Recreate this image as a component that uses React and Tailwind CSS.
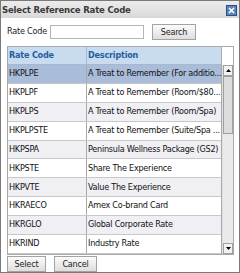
import React from "react";

const ROWS = [
  ["HKPLPE", "A Treat to Remember (For additio..."],
  ["HKPLPF", "A Treat to Remember (Room/$80..."],
  ["HKPLPS", "A Treat to Remember (Room/Spa)"],
  ["HKPLPSTE", "A Treat to Remember (Suite/Spa ..."],
  ["HKPSPA", "Peninsula Wellness Package (GS2)"],
  ["HKPSTE", "Share The Experience"],
  ["HKPVTE", "Value The Experience"],
  ["HKRAECO", "Amex Co-brand Card"],
  ["HKRGLO", "Global Corporate Rate"],
  ["HKRIND", "Industry Rate"],
];

function Btn({ children, className = "" }) {
  return (
    <button
      className={`h-[16px] border border-[#a3a3a3] bg-gradient-to-b from-[#fbfbfb] to-[#dedede] text-[9px] tracking-[-0.2px] leading-none text-[#222] ${className}`}
    >
      {children}
    </button>
  );
}

export default function App() {
  return (
    <div
      className="w-[240px] h-[273px] bg-white border border-[#7a7a7a] flex flex-col overflow-hidden"
      style={{ fontFamily: "'DejaVu Sans Condensed', 'Liberation Sans', sans-serif" }}
    >
      <div className="h-[17px] bg-gradient-to-b from-[#ececec] to-[#d9d9d9] flex items-center justify-between pl-[1px] pr-[2px]">
        <span className="text-[9.5px] font-bold tracking-[-0.2px] text-[#3a3a3a] leading-none whitespace-nowrap">Select Reference Rate Code</span>
        <span className="w-[11px] h-[11px] bg-[#5a86c0] border border-[#2c4f84] flex items-center justify-center mt-[2px]">
          <svg width="7" height="7" viewBox="0 0 7 7">
            <path d="M1 1 L6 6 M6 1 L1 6" stroke="#fff" strokeWidth="1.6" />
          </svg>
        </span>
      </div>

      <div className="flex items-center pl-[6px] mt-[6px] h-[16px]">
        <span className="text-[9px] tracking-[-0.2px] text-[#222] w-[43px] whitespace-nowrap">Rate Code</span>
        <input className="w-[94px] h-[14px] border border-[#b5b5b5] bg-white" />
        <Btn className="ml-[8px] w-[44px]">Search</Btn>
      </div>

      <div className="mt-[6px] ml-[6px] w-[227px] h-[209px] border border-[#a9a9a9] flex">
        <div className="w-[213px] flex flex-col">
          <div className="h-[18px] flex bg-[#c9dbef] border-b border-[#a9b9cc] text-[9px] tracking-[-0.2px] font-bold text-[#23609f]">
            <div className="w-[79px] border-r border-[#a9b9cc] pl-[1px] flex items-center">Rate Code</div>
            <div className="flex-1 pl-[1px] flex items-center">Description</div>
          </div>
          {ROWS.map(([code, desc], i) => (
            <div
              key={code}
              className={`h-[19px] flex text-[9px] tracking-[-0.25px] text-[#111] border-b border-[#c8c8c8] ${
                i === 0 ? "bg-[#a9bcd9]" : i % 2 === 0 ? "bg-[#efeff4]" : "bg-white"
              }`}
            >
              <div className="w-[79px] border-r border-[#a9a9a9] pl-[1px] flex items-center">{code}</div>
              <div className="flex-1 pl-[1px] flex items-center whitespace-nowrap overflow-hidden">{desc}</div>
            </div>
          ))}
        </div>
        <div className="flex-1 border-l border-[#a9a9a9] flex flex-col">
          <div className="h-[18px] bg-white" />
          <div className="flex-1 bg-[#eaeaea] flex flex-col border-l border-[#e0e0e0]">
            <div className="h-[11px] bg-[#f2f2f2] border border-[#a0a0a0] flex items-center justify-center">
              <svg width="5" height="3" viewBox="0 0 5 3"><path d="M0 3 L2.5 0 L5 3 Z" fill="#000" /></svg>
            </div>
            <div className="h-[58px] bg-[#dcdcdc] border border-[#a0a0a0]" />
            <div className="flex-1" />
            <div className="h-[11px] bg-[#f2f2f2] border border-[#a0a0a0] flex items-center justify-center">
              <svg width="5" height="3" viewBox="0 0 5 3"><path d="M0 0 L5 0 L2.5 3 Z" fill="#000" /></svg>
            </div>
          </div>
        </div>
      </div>

      <div className="flex pl-[6px] mt-[1px] gap-[8px]">
        <Btn className="w-[39px]">Select</Btn>
        <Btn className="w-[43px]">Cancel</Btn>
      </div>
    </div>
  );
}
